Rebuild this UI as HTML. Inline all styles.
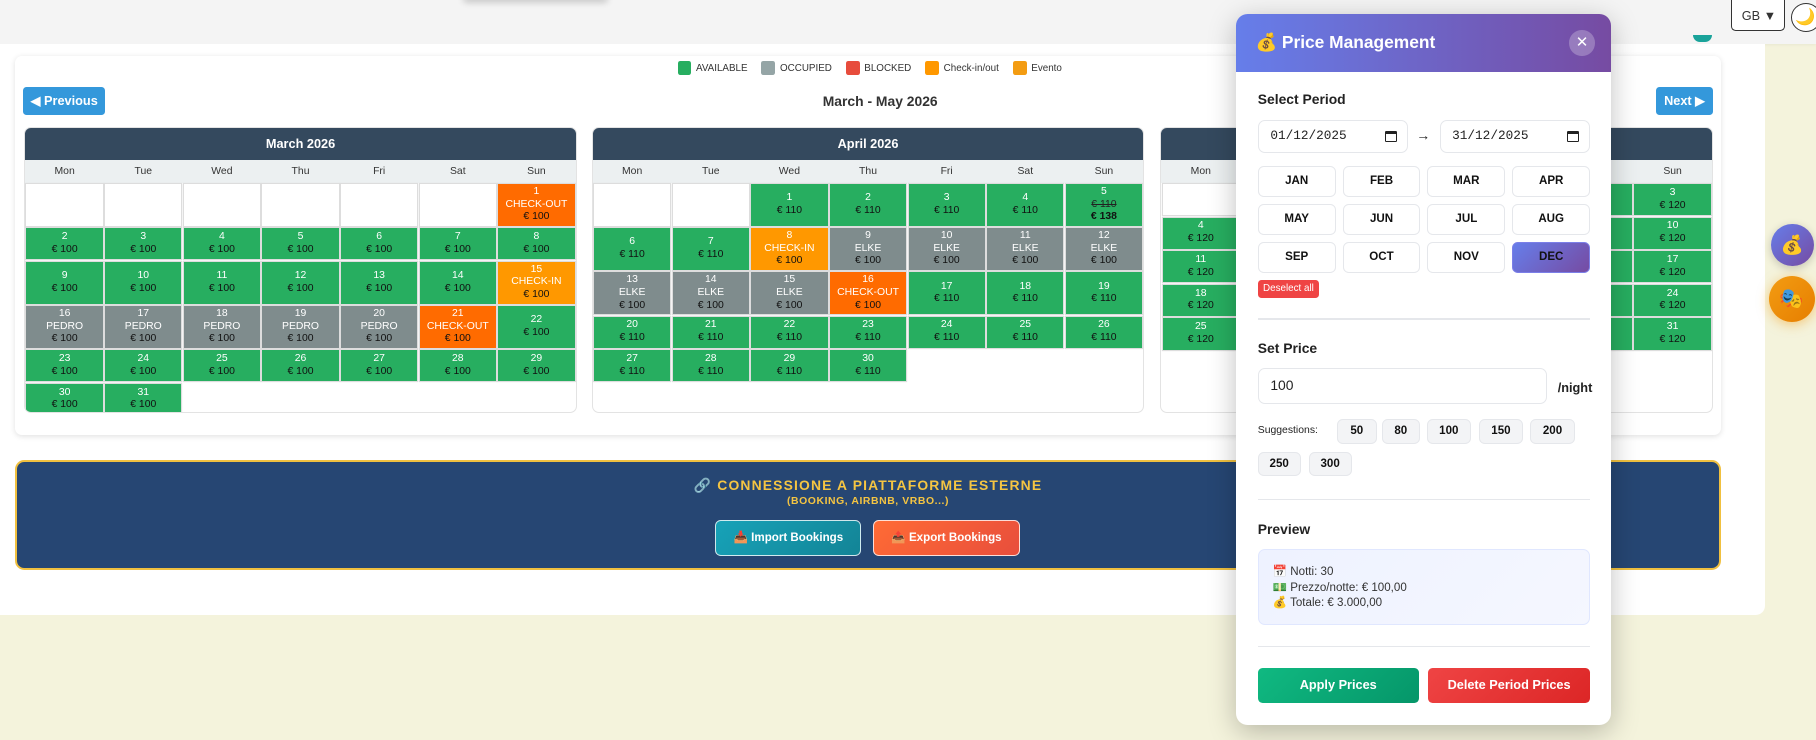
<!DOCTYPE html>
<html><head><meta charset="utf-8">
<style>
*{box-sizing:border-box;margin:0;padding:0}
html,body{width:1816px;height:740px;overflow:hidden}
body{background:#f4f3dc;font-family:"Liberation Sans",sans-serif;color:#222}
#r{zoom:1.15816;position:relative;width:1568px;height:639px;overflow:hidden}
.abs{position:absolute}
.top{left:0;top:0;width:1568px;height:38px;background:#f4f4f4;box-shadow:0 1px 3px rgba(0,0,0,.06)}
.main{left:0;top:38px;width:1524px;height:493px;background:#fff;border-radius:0 0 8px 0}
.card{left:13px;top:48px;width:1473px;height:328px;background:#fff;border-radius:6px;box-shadow:0 1px 5px rgba(0,0,0,.12)}
.leg{top:53px;left:585px;font-size:8.5px;color:#333;display:flex;gap:12px;align-items:center}
.leg span{display:flex;align-items:center;gap:4px}
.leg i{width:12px;height:12px;border-radius:2px;display:inline-block}
.btn{background:#3498db;color:#fff;font-weight:bold;font-size:11px;border-radius:3px;height:24px;line-height:24px;text-align:center;top:75px}
.ttl{top:80px;left:660px;width:200px;text-align:center;font-weight:bold;font-size:12px;color:#333}
.cal{top:110px;width:477px;height:247px;border:1px solid #e3e3e3;border-radius:6px;overflow:hidden;background:#fff}
.ch{height:27px;background:#34495e;color:#fff;font-weight:bold;font-size:11px;text-align:center;line-height:27px}
.wd{height:20px;background:#ecf0f1;display:grid;grid-template-columns:repeat(7,1fr);font-size:9px;color:#333;text-align:center;line-height:20px}
.gr{display:grid;grid-template-columns:repeat(7,1fr);gap:2px;padding:1px}
.c{box-shadow:0 0 0 1px #ddd;font-size:9px;text-align:center;padding:1.6px 0;display:flex;flex-direction:column;justify-content:center;height:auto;min-height:27px;color:#fff}
.c span,.c s,.c em{display:block;height:11px;line-height:11px;overflow:visible}
.c s{color:#222}
.c em{font-style:normal;color:#111}
.g{background:#27ae60}.o{background:#7f8c8d}.co{background:#ff6b00}.ci{background:#ff9800}.e{background:#fff}
.ban{left:13px;top:397px;width:1473px;height:95px;background:#264673;border:2px solid #f0c040;border-radius:8px;text-align:center;color:#f5c542}
.bb{position:absolute;top:50px;height:31px;line-height:30px;color:#fff;font-weight:bold;font-size:10px;border-radius:5px;border:1px solid rgba(255,255,255,.8)}
.modal{left:1067px;top:12px;width:324px;height:614px;background:#fff;border-radius:10px;box-shadow:0 6px 24px rgba(0,0,0,.25);overflow:hidden}
.mh{height:50px;background:linear-gradient(90deg,#667eea,#764ba2);color:#fff;font-weight:bold;font-size:15px;line-height:50px;padding-left:17px}
.x{position:absolute;left:288px;top:14px;width:22px;height:22px;border-radius:50%;background:rgba(255,255,255,.25);color:#fff;font-size:13px;line-height:22px;text-align:center;font-weight:normal}
.lb{position:absolute;left:19px;font-weight:bold;font-size:12px;color:#222}
.inp{position:absolute;height:28px;border:1px solid #e5e7eb;border-radius:6px;font-family:"Liberation Mono",monospace;font-size:11px;line-height:26px;padding-left:10px;color:#222}
.mg{position:absolute;left:19px;top:131px;width:287px;display:grid;grid-template-columns:repeat(4,1fr);gap:6px}
.mg div{height:27px;border:1px solid #e5e7eb;border-radius:5px;text-align:center;line-height:25px;font-weight:bold;font-size:10px;color:#111}
.hr{position:absolute;left:19px;width:287px;height:1px;background:#e5e7eb}
.chip{position:absolute;height:21px;line-height:19px;background:#f3f4f6;border:1px solid #e5e7eb;border-radius:5px;font-weight:bold;font-size:10px;text-align:center;color:#111}
.fb{position:absolute;top:565px;height:30px;line-height:30px;color:#fff;font-weight:bold;font-size:11px;text-align:center;border-radius:4px}
.cic{position:absolute;right:9px;top:8px;width:10px;height:10px;border:1.5px solid #222;border-top-width:3px;border-radius:1px}
</style></head><body><div id="r">
<div class="abs top"></div>
<div class="abs" style="left:400px;top:-6px;width:125px;height:6px;box-shadow:0 2px 6px rgba(0,0,0,.2);border-radius:6px"></div>
<div class="abs" style="left:1495px;top:0;width:46px;height:27px;background:#fff;border:1px solid #333;border-top:none;border-radius:0 0 4px 4px;font-size:11px;line-height:27px;padding-left:8px;color:#333">GB ▼</div>
<div class="abs" style="left:1546px;top:3px;width:26px;height:25px;border:1px solid #333;border-radius:50%;background:#fff;font-size:14px;line-height:23px;padding-left:3px">🌙</div>
<div class="abs main"></div>
<div class="abs" style="left:1462px;top:30px;width:16px;height:6px;background:#1aa39a;border-radius:0 0 8px 8px"></div>
<div class="abs card"></div>
<div class="abs leg"><span><i style="background:#27ae60"></i>AVAILABLE</span><span><i style="background:#95a5a6"></i>OCCUPIED</span><span><i style="background:#e74c3c"></i>BLOCKED</span><span><i style="background:#ff9800"></i>Check-in/out</span><span><i style="background:#f39c12"></i>Evento</span></div>
<div class="abs btn" style="left:20px;width:71px">◀ Previous</div>
<div class="abs ttl">March - May 2026</div>
<div class="abs btn" style="left:1430px;width:49px">Next ▶</div>

<div class="abs cal" style="left:21px"><div class="ch">March 2026</div>
<div class="wd"><span>Mon</span><span>Tue</span><span>Wed</span><span>Thu</span><span>Fri</span><span>Sat</span><span>Sun</span></div>
<div class="gr">
<div class="c e"></div><div class="c e"></div><div class="c e"></div><div class="c e"></div><div class="c e"></div><div class="c e"></div><div class="c co"><span>1</span><span>CHECK-OUT</span><em>€ 100</em></div>
<div class="c g"><span>2</span><em>€ 100</em></div><div class="c g"><span>3</span><em>€ 100</em></div><div class="c g"><span>4</span><em>€ 100</em></div><div class="c g"><span>5</span><em>€ 100</em></div><div class="c g"><span>6</span><em>€ 100</em></div><div class="c g"><span>7</span><em>€ 100</em></div><div class="c g"><span>8</span><em>€ 100</em></div>
<div class="c g"><span>9</span><em>€ 100</em></div><div class="c g"><span>10</span><em>€ 100</em></div><div class="c g"><span>11</span><em>€ 100</em></div><div class="c g"><span>12</span><em>€ 100</em></div><div class="c g"><span>13</span><em>€ 100</em></div><div class="c g"><span>14</span><em>€ 100</em></div><div class="c ci"><span>15</span><span>CHECK-IN</span><em>€ 100</em></div>
<div class="c o"><span>16</span><span>PEDRO</span><em>€ 100</em></div><div class="c o"><span>17</span><span>PEDRO</span><em>€ 100</em></div><div class="c o"><span>18</span><span>PEDRO</span><em>€ 100</em></div><div class="c o"><span>19</span><span>PEDRO</span><em>€ 100</em></div><div class="c o"><span>20</span><span>PEDRO</span><em>€ 100</em></div><div class="c co"><span>21</span><span>CHECK-OUT</span><em>€ 100</em></div><div class="c g"><span>22</span><em>€ 100</em></div>
<div class="c g"><span>23</span><em>€ 100</em></div><div class="c g"><span>24</span><em>€ 100</em></div><div class="c g"><span>25</span><em>€ 100</em></div><div class="c g"><span>26</span><em>€ 100</em></div><div class="c g"><span>27</span><em>€ 100</em></div><div class="c g"><span>28</span><em>€ 100</em></div><div class="c g"><span>29</span><em>€ 100</em></div>
<div class="c g"><span>30</span><em>€ 100</em></div><div class="c g"><span>31</span><em>€ 100</em></div>
</div></div>

<div class="abs cal" style="left:511px"><div class="ch">April 2026</div>
<div class="wd"><span>Mon</span><span>Tue</span><span>Wed</span><span>Thu</span><span>Fri</span><span>Sat</span><span>Sun</span></div>
<div class="gr">
<div class="c e"></div><div class="c e"></div><div class="c g"><span>1</span><em>€ 110</em></div><div class="c g"><span>2</span><em>€ 110</em></div><div class="c g"><span>3</span><em>€ 110</em></div><div class="c g"><span>4</span><em>€ 110</em></div><div class="c g"><span>5</span><s>€ 110</s><em style="font-weight:bold">€ 138</em></div>
<div class="c g"><span>6</span><em>€ 110</em></div><div class="c g"><span>7</span><em>€ 110</em></div><div class="c ci"><span>8</span><span>CHECK-IN</span><em>€ 100</em></div><div class="c o"><span>9</span><span>ELKE</span><em>€ 100</em></div><div class="c o"><span>10</span><span>ELKE</span><em>€ 100</em></div><div class="c o"><span>11</span><span>ELKE</span><em>€ 100</em></div><div class="c o"><span>12</span><span>ELKE</span><em>€ 100</em></div>
<div class="c o"><span>13</span><span>ELKE</span><em>€ 100</em></div><div class="c o"><span>14</span><span>ELKE</span><em>€ 100</em></div><div class="c o"><span>15</span><span>ELKE</span><em>€ 100</em></div><div class="c co"><span>16</span><span>CHECK-OUT</span><em>€ 100</em></div><div class="c g"><span>17</span><em>€ 110</em></div><div class="c g"><span>18</span><em>€ 110</em></div><div class="c g"><span>19</span><em>€ 110</em></div>
<div class="c g"><span>20</span><em>€ 110</em></div><div class="c g"><span>21</span><em>€ 110</em></div><div class="c g"><span>22</span><em>€ 110</em></div><div class="c g"><span>23</span><em>€ 110</em></div><div class="c g"><span>24</span><em>€ 110</em></div><div class="c g"><span>25</span><em>€ 110</em></div><div class="c g"><span>26</span><em>€ 110</em></div>
<div class="c g"><span>27</span><em>€ 110</em></div><div class="c g"><span>28</span><em>€ 110</em></div><div class="c g"><span>29</span><em>€ 110</em></div><div class="c g"><span>30</span><em>€ 110</em></div>
</div></div>

<div class="abs cal" style="left:1002px"><div class="ch">May 2026</div>
<div class="wd"><span>Mon</span><span>Tue</span><span>Wed</span><span>Thu</span><span>Fri</span><span>Sat</span><span>Sun</span></div>
<div class="gr">
<div class="c e"></div><div class="c e"></div><div class="c e"></div><div class="c e"></div><div class="c g"><span>1</span><em>€ 120</em></div><div class="c g"><span>2</span><em>€ 120</em></div><div class="c g"><span>3</span><em>€ 120</em></div>
<div class="c g"><span>4</span><em>€ 120</em></div><div class="c g"><span>5</span><em>€ 120</em></div><div class="c g"><span>6</span><em>€ 120</em></div><div class="c g"><span>7</span><em>€ 120</em></div><div class="c g"><span>8</span><em>€ 120</em></div><div class="c g"><span>9</span><em>€ 120</em></div><div class="c g"><span>10</span><em>€ 120</em></div>
<div class="c g"><span>11</span><em>€ 120</em></div><div class="c g"><span>12</span><em>€ 120</em></div><div class="c g"><span>13</span><em>€ 120</em></div><div class="c g"><span>14</span><em>€ 120</em></div><div class="c g"><span>15</span><em>€ 120</em></div><div class="c g"><span>16</span><em>€ 120</em></div><div class="c g"><span>17</span><em>€ 120</em></div>
<div class="c g"><span>18</span><em>€ 120</em></div><div class="c g"><span>19</span><em>€ 120</em></div><div class="c g"><span>20</span><em>€ 120</em></div><div class="c g"><span>21</span><em>€ 120</em></div><div class="c g"><span>22</span><em>€ 120</em></div><div class="c g"><span>23</span><em>€ 120</em></div><div class="c g"><span>24</span><em>€ 120</em></div>
<div class="c g"><span>25</span><em>€ 120</em></div><div class="c g"><span>26</span><em>€ 120</em></div><div class="c g"><span>27</span><em>€ 120</em></div><div class="c g"><span>28</span><em>€ 120</em></div><div class="c g"><span>29</span><em>€ 120</em></div><div class="c g"><span>30</span><em>€ 120</em></div><div class="c g"><span>31</span><em>€ 120</em></div>
</div></div>

<div class="abs ban">
<div style="margin-top:13px;font-weight:bold;font-size:12px;letter-spacing:1px">🔗 CONNESSIONE A PIATTAFORME ESTERNE</div>
<div style="margin-top:2px;font-weight:bold;font-size:9px;letter-spacing:.5px">(BOOKING, AIRBNB, VRBO...)</div>
<div class="bb" style="left:603px;width:126px;background:linear-gradient(135deg,#17a2b8,#138496)">📥 Import Bookings</div>
<div class="bb" style="left:739px;width:127px;background:linear-gradient(135deg,#ff6b35,#e84e3c)">📤 Export Bookings</div>
</div>

<div class="abs modal">
<div class="mh">💰 Price Management<div class="x">✕</div></div>
<div class="lb" style="top:67px">Select Period</div>
<div class="inp" style="left:19px;top:92px;width:130px">01/12/2025<i class="cic"></i></div>
<div style="position:absolute;left:156px;top:98px;font-size:12px">→</div>
<div class="inp" style="left:176px;top:92px;width:130px">31/12/2025<i class="cic"></i></div>
<div class="mg"><div>JAN</div><div>FEB</div><div>MAR</div><div>APR</div><div>MAY</div><div>JUN</div><div>JUL</div><div>AUG</div><div>SEP</div><div>OCT</div><div>NOV</div><div style="background:linear-gradient(135deg,#667eea,#764ba2);border-color:#7b7fe8">DEC</div></div>
<div style="position:absolute;left:19px;top:230px;width:53px;height:15px;background:#ef4444;color:#fff;font-size:8.5px;line-height:15px;text-align:center;border-radius:3px">Deselect all</div>
<div class="hr" style="top:263px"></div>
<div class="lb" style="top:282px">Set Price</div>
<div class="inp" style="left:19px;top:306px;width:250px;height:31px;line-height:29px;font-family:'Liberation Sans',sans-serif;font-size:12px">100</div>
<div style="position:absolute;left:278px;top:316px;font-weight:bold;font-size:11px">/night</div>
<div style="position:absolute;left:19px;top:355px;font-size:9px">Suggestions:</div>
<div class="chip" style="left:87px;top:350px;width:35px">50</div>
<div class="chip" style="left:126px;top:350px;width:33px">80</div>
<div class="chip" style="left:165px;top:350px;width:38px">100</div>
<div class="chip" style="left:210px;top:350px;width:38px">150</div>
<div class="chip" style="left:254px;top:350px;width:39px">200</div>
<div class="chip" style="left:19px;top:378px;width:37px">250</div>
<div class="chip" style="left:63px;top:378px;width:37px">300</div>
<div class="hr" style="top:419px"></div>
<div class="lb" style="top:438px">Preview</div>
<div style="position:absolute;left:19px;top:462px;width:287px;height:66px;background:linear-gradient(135deg,#eef2ff,#f5f7ff);border:1px solid #e0e7ff;border-radius:6px;font-size:10px;line-height:13.5px;padding:13px 0 0 12px;color:#333">📅 Notti: 30<br>💵 Prezzo/notte: € 100,00<br>💰 Totale: € 3.000,00</div>
<div class="hr" style="top:546px"></div>
<div class="fb" style="left:19px;width:139px;background:linear-gradient(135deg,#10b981,#059669)">Apply Prices</div>
<div class="fb" style="left:166px;width:140px;background:linear-gradient(135deg,#ef4444,#dc2626)">Delete Period Prices</div>
</div>

<div class="abs" style="left:1529px;top:193px;width:37px;height:37px;border-radius:50%;background:linear-gradient(135deg,#667eea,#764ba2);text-align:center;line-height:37px;font-size:16px;box-shadow:0 2px 8px rgba(0,0,0,.2)">💰</div>
<div class="abs" style="left:1527px;top:238px;width:40px;height:40px;border-radius:50%;background:linear-gradient(135deg,#f39c12,#e67e00);text-align:center;line-height:40px;font-size:17px;box-shadow:0 2px 10px rgba(243,156,18,.5)">🎭</div>
</div></body></html>
